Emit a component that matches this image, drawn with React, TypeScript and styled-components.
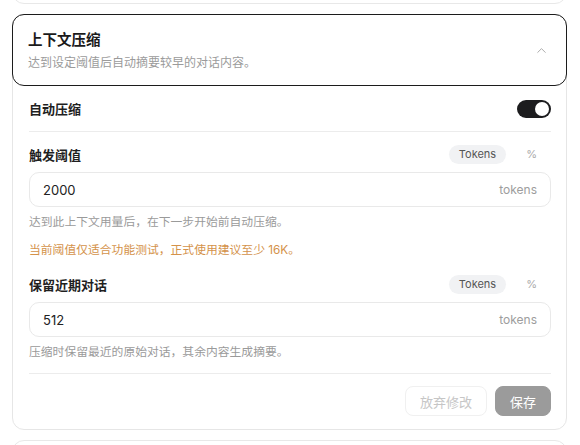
import React, { FunctionComponent } from 'react';
import styled, { createGlobalStyle } from 'styled-components';
import { ChevronUp } from 'lucide-react';

const GlobalStyle = createGlobalStyle`
  body {
    margin: 0;
    background: #ffffff;
    font-family: Inter, "Noto Sans CJK SC", "Noto Sans", sans-serif;
    color: #1f1f1f;
    overflow: hidden;
  }
`;

const Page = styled.div`
    display: flex;
    flex-direction: column;
    gap: 10px;
    padding: 0 13px 0 12px;
  `,
  GhostCard = styled.div<{ edge: 'top' | 'bottom' }>`
    height: 32px;
    border: 1px solid #e8e8e8;
    border-radius: 12px;
    margin-top: ${(props) => (props.edge === 'top' ? '-30px' : '0')};
  `,
  Card = styled.section`
    border: 1px solid #e6e6e6;
    border-radius: 12px;
    background: #fff;
  `,
  Header = styled.div`
    display: flex;
    align-items: center;
    justify-content: space-between;
    margin: -1px -1px 0;
    padding: 0 17px 0 15px;
    height: 70px;
    border: 1.5px solid #1c1c1c;
    border-radius: 12px;
  `,
  HeaderText = styled.div`
    display: flex;
    flex-direction: column;
    gap: 5px;
  `,
  Title = styled.div`
    font-size: 14.5px;
    font-weight: 700;
    line-height: 20px;
    color: #1a1a1a;
  `,
  Subtitle = styled.div`
    font-size: 12px;
    line-height: 16px;
    color: #9b9b9b;
  `,
  Body = styled.div`
    padding: 0 15px 13px 16px;
  `,
  SwitchRow = styled.div`
    display: flex;
    align-items: center;
    justify-content: space-between;
    height: 45px;
    border-bottom: 1px solid #ececec;
  `,
  Label = styled.div`
    font-size: 13px;
    font-weight: 700;
    color: #1f1f1f;
  `,
  Switch = styled.div<{ on: boolean }>`
    width: 34px;
    height: 18px;
    border-radius: 9px;
    background: ${(props) => (props.on ? '#1c1c1e' : '#d8d8d8')};
    display: flex;
    align-items: center;
    justify-content: ${(props) => (props.on ? 'flex-end' : 'flex-start')};
    padding: 0 2px;
    box-sizing: border-box;
  `,
  Knob = styled.div`
    width: 14px;
    height: 14px;
    border-radius: 50%;
    background: #fff;
  `,
  Field = styled.div`
    display: flex;
    flex-direction: column;
    padding-top: 13px;

    & + & {
      padding-top: 17px;
    }
  `,
  FieldHead = styled.div`
    display: flex;
    align-items: center;
    justify-content: space-between;
    height: 19px;
  `,
  Units = styled.div`
    display: flex;
    align-items: center;
    gap: 6px;
  `,
  Unit = styled.div<{ active?: boolean }>`
    height: 19px;
    line-height: 19px;
    padding: 0 ${(props) => (props.active ? '10px' : '14px')};
    border-radius: 10px;
    font-size: 11px;
    color: ${(props) => (props.active ? '#555' : '#aaa')};
    background: ${(props) => (props.active ? '#f1f2f4' : 'transparent')};
  `,
  InputBox = styled.div`
    display: flex;
    align-items: center;
    justify-content: space-between;
    height: 35px;
    margin-top: 8px;
    padding: 0 13px;
    border: 1px solid #e9e9e9;
    border-radius: 10px;
    box-sizing: border-box;
  `,
  Value = styled.span`
    font-size: 13px;
    color: #222;
  `,
  Suffix = styled.span`
    font-size: 12px;
    color: #9d9d9d;
  `,
  Hint = styled.div<{ tone?: 'warn' }>`
    font-size: 11.8px;
    line-height: 16px;
    margin-top: ${(props) => (props.tone === 'warn' ? '12px' : '7px')};
    color: ${(props) => (props.tone === 'warn' ? '#d4924a' : '#9a9a9a')};
  `,
  Footer = styled.div`
    display: flex;
    justify-content: flex-end;
    gap: 8px;
    margin-top: 13px;
    padding-top: 12px;
    border-top: 1px solid #ececec;
  `,
  Button = styled.button<{ primary?: boolean }>`
    height: 30px;
    padding: 0 14px;
    border-radius: 8px;
    font-family: inherit;
    font-size: 13px;
    border: 1px solid ${(props) => (props.primary ? '#9b9b9b' : '#f0f0f0')};
    background: ${(props) => (props.primary ? '#9b9b9b' : '#fff')};
    color: ${(props) => (props.primary ? '#fff' : '#c6c6c6')};
  `;

type ThresholdProps = {
  label: string;
  value: string;
  hint: string;
  warning?: string;
};

const ThresholdField: FunctionComponent<ThresholdProps> = ({ label, value, hint, warning }) => (
  <Field>
    <FieldHead>
      <Label>{label}</Label>
      <Units>
        <Unit active>Tokens</Unit>
        <Unit>%</Unit>
      </Units>
    </FieldHead>
    <InputBox>
      <Value>{value}</Value>
      <Suffix>tokens</Suffix>
    </InputBox>
    <Hint>{hint}</Hint>
    {warning && <Hint tone="warn">{warning}</Hint>}
  </Field>
);

const App: FunctionComponent = () => (
  <>
    <GlobalStyle />
    <Page>
      <GhostCard edge="top" />
      <Card>
        <Header>
          <HeaderText>
            <Title>上下文压缩</Title>
            <Subtitle>达到设定阈值后自动摘要较早的对话内容。</Subtitle>
          </HeaderText>
          <ChevronUp size={15} strokeWidth={1.4} color="#a0a0a0" />
        </Header>
        <Body>
          <SwitchRow>
            <Label>自动压缩</Label>
            <Switch on>
              <Knob />
            </Switch>
          </SwitchRow>
          <ThresholdField
            label="触发阈值"
            value="2000"
            hint="达到此上下文用量后，在下一步开始前自动压缩。"
            warning="当前阈值仅适合功能测试，正式使用建议至少 16K。"
          />
          <ThresholdField label="保留近期对话" value="512" hint="压缩时保留最近的原始对话，其余内容生成摘要。" />
          <Footer>
            <Button>放弃修改</Button>
            <Button primary>保存</Button>
          </Footer>
        </Body>
      </Card>
      <GhostCard edge="bottom" />
    </Page>
  </>
);

export default App;
